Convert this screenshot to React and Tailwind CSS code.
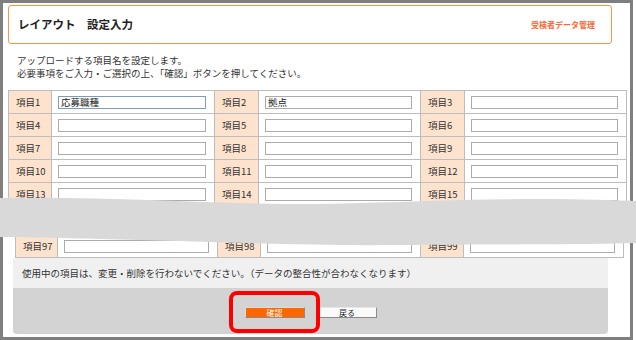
import React from "react";

const rowsTop = [
  [1, "応募職種", 2, "拠点", 3, ""],
  [4, "", 5, "", 6, ""],
  [7, "", 8, "", 9, ""],
  [10, "", 11, "", 12, ""],
  [13, "", 14, "", 15, ""],
];

const Field = ({ value, focus }) => (
  <input
    readOnly
    value={value}
    className={`h-[13px] w-full bg-white px-[2px] text-[9.5px] leading-[11px] text-[#222] outline-none border ${
      focus ? "border-[#7f9db9]" : "border-[#ababab]"
    }`}
  />
);

const Label = ({ n }) => (
  <div className="h-[23px] border-r border-b border-[#bdbdbd] bg-[#fde2cd] flex items-center pl-[7px] text-[9.5px]">
    項目{n}
  </div>
);

const Cell = ({ value, focus }) => (
  <div className="h-[23px] border-r border-b border-[#bdbdbd] flex items-center pl-[6px] pr-[8px]">
    <Field value={value} focus={focus} />
  </div>
);

const App = () => {
  return (
    <div className="relative w-[636px] h-[340px] bg-white font-['Noto_Sans_CJK_JP',sans-serif] text-[#333] overflow-hidden">
      <div className="w-[633px] h-[340px] border-[3px] border-[#7f7f7f]">
        <div className="ml-[5px] mt-[2px] w-[604px] h-[39px] border border-[#f79646] rounded-[3px] flex items-center justify-between pl-[9px] pr-[16px]">
          <span className="text-[11.5px] font-bold text-[#222]">レイアウト　設定入力</span>
          <span className="text-[8px] font-bold text-[#ff6633]">受検者データ管理</span>
        </div>

        <div className="mt-[10px] pl-[14px] text-[9.5px] leading-[13px]">
          <p>アップロードする項目名を設定します。</p>
          <p>必要事項をご入力・ご選択の上、「確認」ボタンを押してください。</p>
        </div>

        <div className="mt-[10px] ml-[5px] w-[619px] border-t border-l border-[#bdbdbd] grid grid-cols-[43px_163px_44px_162px_44px_162px]">
          {rowsTop.map((r, i) => (
            <React.Fragment key={i}>
              <Label n={r[0]} />
              <Cell value={r[1]} focus={i === 0} />
              <Label n={r[2]} />
              <Cell value={r[3]} />
              <Label n={r[4]} />
              <Cell value={r[5]} />
            </React.Fragment>
          ))}
        </div>

        <div className="mt-[29px] ml-[12px] w-[608px] border-l border-[#bdbdbd] grid grid-cols-[42px_160px_43px_160px_43px_160px]">
          <Label n={97} />
          <Cell value="" />
          <Label n={98} />
          <Cell value="" />
          <Label n={99} />
          <Cell value="" />
        </div>

        <div className="ml-[10px] w-[595px] h-[30px] bg-[#f0f0f0] flex items-center pl-[9px] text-[9.5px]">
          使用中の項目は、変更・削除を行わないでください。（データの整合性が合わなくなります）
        </div>
        <div className="ml-[10px] w-[595px] h-[46px] bg-[#d3d3d3] rounded-b-[4px] flex items-center justify-center gap-[13px] pt-[3px]">
          <button className="w-[60px] h-[11px] bg-[#ff6600] border border-[#dcdcdc] border-r-[#8a8a8a] border-b-[#8a8a8a] text-white text-[8px] leading-[9px]">
            確認
          </button>
          <button className="w-[59px] h-[11px] bg-[#fafafa] border border-[#e8e8e8] border-r-[#8a8a8a] border-b-[#8a8a8a] text-[#222] text-[8px] leading-[9px]">
            戻る
          </button>
        </div>
      </div>

      <svg className="absolute left-0 top-[190px]" width="636" height="62" viewBox="0 190 636 62">
        <path
          d="M0,198 C120,196 220,205 320,204 C420,202 500,196 636,201 L636,243 C560,245 470,244 400,245 C300,246 200,241 100,239 C60,238 20,237 0,237 Z"
          fill="#d9d9d9"
        />
      </svg>

      <div className="absolute left-[229px] top-[291px] w-[91px] h-[42px] border-[4px] border-[#ff0000] rounded-[8px]" />
    </div>
  );
};

export default App;
